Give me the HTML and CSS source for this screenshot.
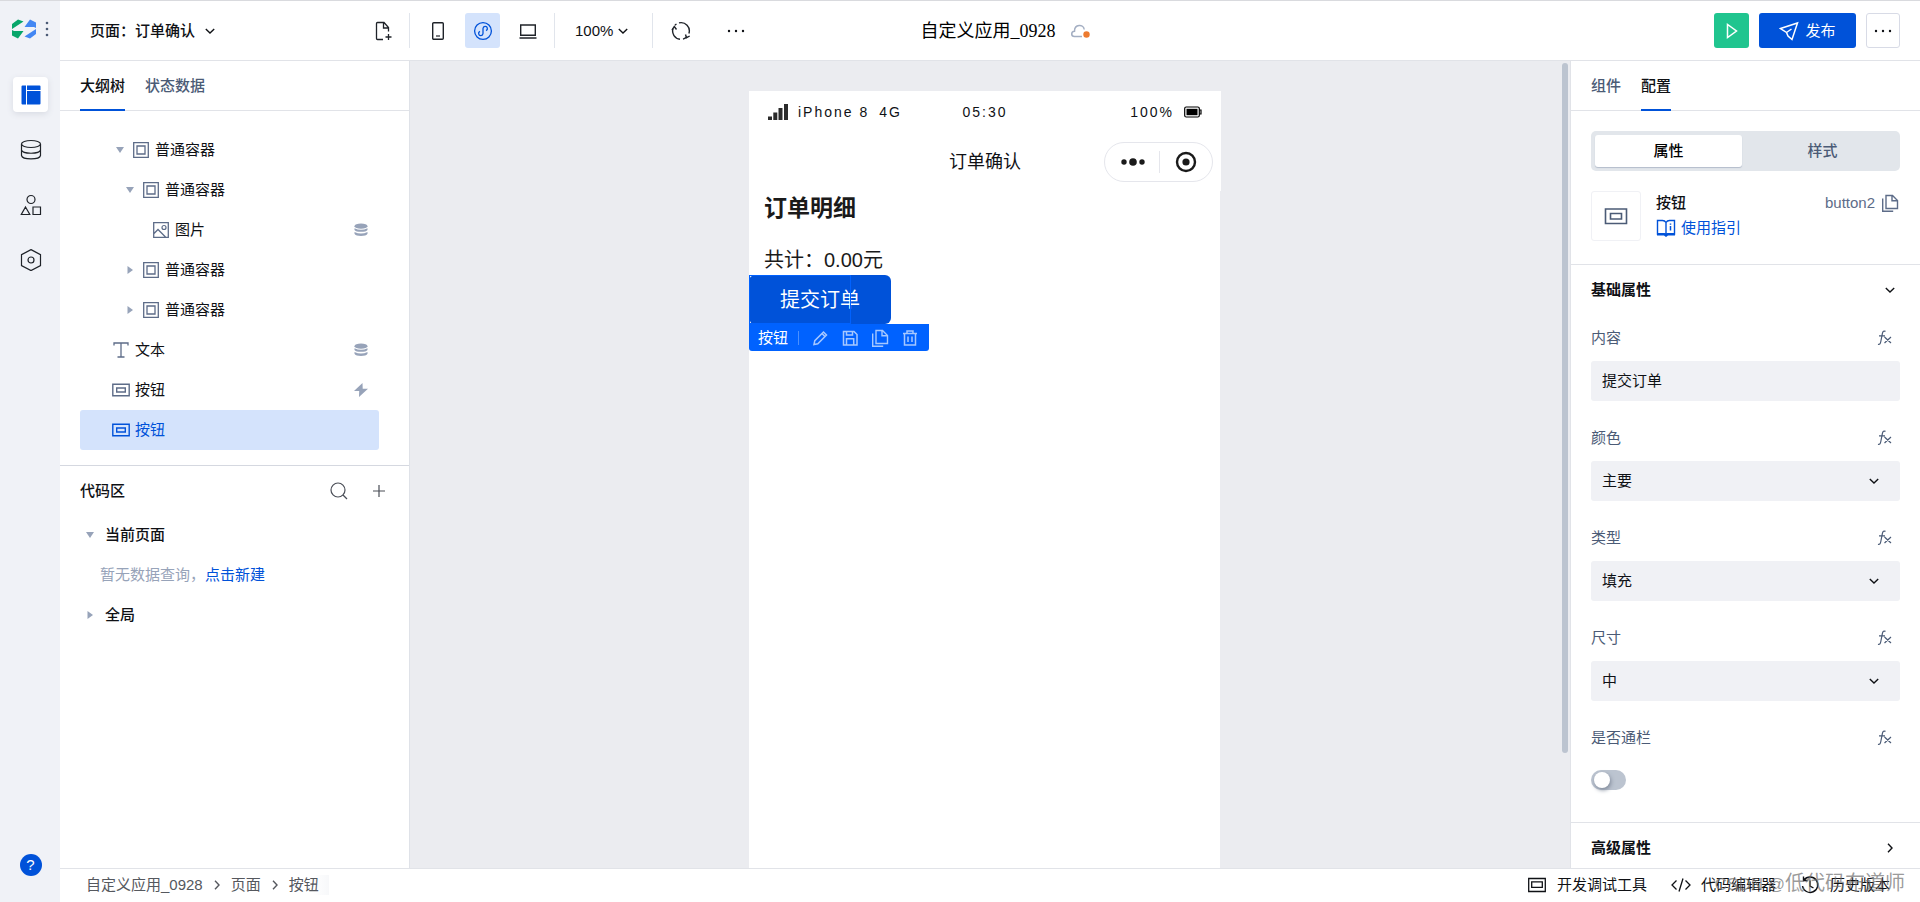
FILE: index.html
```html
<!DOCTYPE html>
<html lang="zh-CN">
<head>
<meta charset="utf-8">
<title>自定义应用_0928</title>
<link rel="stylesheet" href="styles.css">
</head>
<body>
<svg class="sprite" aria-hidden="true">
  <symbol id="i-down" viewBox="0 0 12 12"><path d="M1.800 4l4.200 4 4.200-4" stroke-width="1.400"/></symbol>
  <symbol id="i-right" viewBox="0 0 12 12"><path d="M4 1.800l4 4.200-4 4.200" stroke-width="1.400"/></symbol>
  <symbol id="i-tri-down" viewBox="0 0 8 8"><path d="M0 1h8L4 7z" fill="currentColor" stroke="none"/></symbol>
  <symbol id="i-tri-right" viewBox="0 0 8 8"><path d="M1.500 0v8L7 4z" fill="currentColor" stroke="none"/></symbol>
  <symbol id="i-box" viewBox="0 0 18 18"><path d="M1.700 1.700h14.600v14.600H1.700z" stroke-width="1.300"/><path d="M5 5h8v8H5z" stroke-width="1.300"/></symbol>
  <symbol id="i-image" viewBox="0 0 18 18"><path d="M1.700 1.700h14.600v14.600H1.700zM2 12.500l4-4 7.500 7.500" stroke-width="1.300"/><circle cx="12" cy="6.500" r="2" stroke-width="1.200"/></symbol>
  <symbol id="i-text" viewBox="0 0 18 18"><path d="M2 4.500V2h14v2.500M9 2v14M5.500 16h7" stroke-width="1.300"/></symbol>
  <symbol id="i-btn" viewBox="0 0 18 18"><path d="M.8 3.200h16.400v11.600H.8z" stroke-width="1.400"/><path d="M4.700 7h8.600v4H4.700z" stroke-width="1.400"/></symbol>
  <symbol id="i-data" viewBox="0 0 14 14"><g fill="currentColor" stroke="none"><ellipse cx="7" cy="3.200" rx="6.500" ry="2.600"/><path d="M.5 5.200q6.500 3 13 0v1.700c-1 2.600-12 2.600-13 0zM.5 9q6.500 3 13 0v1.700c-1 3-12 3-13 0z"/></g></symbol>
  <symbol id="i-bolt" viewBox="0 0 14 14"><path d="M8.500 0L0 8h5.200L5 14 14 5.800H8.700z" fill="currentColor" stroke="none"/></symbol>
  <symbol id="i-copy" viewBox="0 0 18 18"><path d="M5 1.500h6.500l5 5v8H5zM11 1.500v5.300h5.500" stroke-width="1.400"/><path d="M1.700 4.500v12.700h10.500" stroke-width="1.400"/></symbol>
  <symbol id="i-dots" viewBox="0 0 18 18"><g fill="currentColor" stroke="none"><circle cx="2" cy="9" r="1.200"/><circle cx="9" cy="9" r="1.200"/><circle cx="16" cy="9" r="1.200"/></g></symbol>
  <symbol id="i-fx" viewBox="0 0 16 16"><path d="M8.500 1.400C6.800.5 5.800 1.400 5.400 3.400L3.700 12c-.4 2-1.200 2.800-2.700 2.200M2 5.800h6M7.500 7l6.500 6M14 7l-6.500 6" stroke-width="1.200"/></symbol>
</svg>

<div class="app">
  <nav class="rail" aria-label="主导航">
    <div class="brand">
      <svg class="logo" viewBox="0 0 24 20"><path d="M0 5L6 .5l5.500 2L0 10zM0 11l2 1h9.500L6 19.500l-6-3z" fill="#07a66a"/><path d="M24 9l-2-1h-9.500L18 .5l6 3zM24 15l-6 4.500-5.500-2L24 10z" fill="#4387f3"/></svg>
      <button class="plain" aria-label="菜单"><svg class="grip" viewBox="0 0 4 16"><g fill="#4b5b76"><circle cx="2" cy="2" r="1.300"/><circle cx="2" cy="8" r="1.300"/><circle cx="2" cy="14" r="1.300"/></g></svg></button>
    </div>
    <div class="rail-items">
      <button class="rail-btn on" aria-label="页面设计"><svg viewBox="0 0 22 22"><path d="M1.500 2.500q0-1 1-1h3.500v19H2.500q-1 0-1-1zM7 1.500h12.500q1 0 1 1v3.500H7zM7 7h13.500v12.500q0 1-1 1H7z" fill="#0052d9"/></svg></button>
      <button class="rail-btn" aria-label="数据源"><svg class="line" viewBox="0 0 22 22"><ellipse cx="11" cy="5" rx="9.500" ry="3.500"/><path d="M1.500 5v11.500c1 4.500 18 4.500 19 0V5M1.500 11c1 4.300 18 4.300 19 0"/></svg></button>
      <button class="rail-btn" aria-label="组件库"><svg class="line" viewBox="0 0 22 22"><circle cx="11" cy="5.500" r="4"/><path d="M5.500 13l4.300 7.500H1.300zM13 13h7.500v7.500H13z"/></svg></button>
      <button class="rail-btn" aria-label="设置"><svg class="line" viewBox="0 0 22 22"><path d="M11 .6l9.500 5v11L11 21.600l-9.500-5v-11z"/><circle cx="11" cy="11" r="3"/></svg></button>
    </div>
    <button class="help" aria-label="帮助">?</button>
  </nav>

  <header class="top">
    <div class="top-left">
      <div class="page-bar">
        <button class="plain page-pick">页面：订单确认<svg class="ic12"><use href="#i-down"/></svg></button>
        <button class="plain" aria-label="新建页面"><svg class="ic20 line" viewBox="0 0 20 20"><path d="M9 18.500H3.500q-1 0-1-1v-15q0-1 1-1h6.500l4.500 5v4M9.500 1.500v5.500h5M14.500 13v6M11.500 16h6" stroke-width="1.300"/></svg></button>
      </div>
      <div class="devices">
        <button class="tool" aria-label="手机"><svg class="ic20 line" viewBox="0 0 20 20"><rect x="4.700" y="1.700" width="10.600" height="16.600" rx="1" stroke-width="1.400"/><path d="M8 15h4"/></svg></button>
        <button class="tool on" aria-label="小程序"><svg class="ic20" viewBox="0 0 20 20"><circle cx="10" cy="10" r="8.400" stroke-width="1.300"/><path d="M10 12.500V7.500a2.200 2.200 0 1 1 3 2.200M10 7.500v5a2.200 2.200 0 1 1-3-2.200" stroke-width="1.300"/></svg></button>
        <button class="tool" aria-label="电脑"><svg class="ic20 line" viewBox="0 0 20 20"><path d="M2.700 4h14.600v10.200H2.700zM1.500 17h17" stroke-width="1.400"/></svg></button>
      </div>
      <div class="zoom"><button class="plain zoom-btn">100%<svg class="ic12"><use href="#i-down"/></svg></button></div>
      <div class="actions">
        <button class="plain" aria-label="刷新"><svg class="ic20 line" viewBox="0 0 20 20"><path d="M8 1.900A8.300 8.300 0 0 1 17.900 12.500M16 15.700A8.300 8.300 0 0 1 12 18.100M9 18.250A8.300 8.300 0 0 1 2 7.500M4 4.200A8.300 8.300 0 0 1 5.500 3" stroke-width="1.400"/><path d="M1 9.200L3.300 5.500 5.500 8.500M14.500 13.500l1 3.200 3.200-1.700" stroke-width="1.400"/></svg></button>
        <button class="plain" aria-label="更多"><svg class="ic18"><use href="#i-dots"/></svg></button>
      </div>
    </div>
    <h1 class="app-title">自定义应用_0928<svg class="cloud" viewBox="0 0 20 16"><path d="M12 13.500H4.500C.8 13.500.8 8.500 4.500 8.200 4.500 1 13.500 1 14.200 6.500" stroke="#a3aec2" stroke-width="1.500"/><circle cx="16.500" cy="11.500" r="3.200" fill="#ed7b2f" stroke="none"/></svg></h1>
    <div class="top-right">
      <button class="play" aria-label="预览"><svg class="ic18" viewBox="0 0 18 18"><path d="M4.500 2.500v13L13.500 9z" stroke-width="1.500"/></svg></button>
      <button class="publish"><svg class="ic20" viewBox="0 0 20 20"><path d="M1.500 7.500L18.500 2l-5.500 16.500-4-3.500-1.500-3.500zM7.500 11.500l5-3.500" stroke-width="1.500"/></svg>发布</button>
      <button class="more" aria-label="更多操作"><svg class="ic18"><use href="#i-dots"/></svg></button>
    </div>
  </header>

  <aside class="left">
    <div class="tabs" role="tablist">
      <button class="tab on" role="tab">大纲树</button>
      <button class="tab" role="tab">状态数据</button>
    </div>
    <div class="tree">
      <button class="node lv2"><svg class="tri"><use href="#i-tri-down"/></svg><svg class="ic18"><use href="#i-box"/></svg><span>普通容器</span></button>
      <button class="node lv3"><svg class="tri"><use href="#i-tri-down"/></svg><svg class="ic18"><use href="#i-box"/></svg><span>普通容器</span></button>
      <button class="node lv4"><svg class="tri"></svg><svg class="ic18"><use href="#i-image"/></svg><span>图片</span><svg class="mark"><use href="#i-data"/></svg></button>
      <button class="node lv3"><svg class="tri"><use href="#i-tri-right"/></svg><svg class="ic18"><use href="#i-box"/></svg><span>普通容器</span></button>
      <button class="node lv3"><svg class="tri"><use href="#i-tri-right"/></svg><svg class="ic18"><use href="#i-box"/></svg><span>普通容器</span></button>
      <button class="node"><svg class="tri"></svg><svg class="ic18"><use href="#i-text"/></svg><span>文本</span><svg class="mark"><use href="#i-data"/></svg></button>
      <button class="node"><svg class="tri"></svg><svg class="ic18"><use href="#i-btn"/></svg><span>按钮</span><svg class="mark"><use href="#i-bolt"/></svg></button>
      <button class="node on"><svg class="tri"></svg><svg class="ic18"><use href="#i-btn"/></svg><span>按钮</span></button>
    </div>
    <section class="code">
      <div class="code-head">
        <h2>代码区</h2>
        <button class="plain" aria-label="搜索"><svg class="ic20 thin" viewBox="0 0 20 20"><circle cx="9" cy="9" r="7"/><path d="M14 14l4 4"/></svg></button>
        <button class="plain" aria-label="新增"><svg class="ic20 thin" viewBox="0 0 20 20"><path d="M10 4v12M4 10h12"/></svg></button>
      </div>
      <button class="group"><svg class="tri"><use href="#i-tri-down"/></svg>当前页面</button>
      <p class="empty">暂无数据查询，<a href="#new">点击新建</a></p>
      <button class="group"><svg class="tri"><use href="#i-tri-right"/></svg>全局</button>
    </section>
  </aside>

  <main class="stage">
    <div class="phone">
      <div class="status">
        <span class="carrier"><svg class="signal" viewBox="0 0 20 16"><path d="M0 12.500h4V16H0zM5.300 8.500h4V16h-4zM10.500 4h4v12h-4zM16 0h4v16h-4z" fill="#2b2b2b"/></svg>iPhone 8<span>4G</span></span>
        <span>05:30</span>
        <span class="power">100%<svg class="battery" viewBox="0 0 18 12"><rect x=".7" y="1" width="14.600" height="10" rx="1.500" stroke="#000" stroke-width="1.200"/><path d="M2.500 2.800h11v6.400h-11z" fill="#000" stroke="none"/><path d="M15.500 4h1.500v4h-1.500" stroke="#000" stroke-width="1.200"/></svg></span>
      </div>
      <div class="navbar">
        <span class="nav-title">订单确认</span>
        <div class="capsule">
          <button class="plain" aria-label="更多"><svg class="cap-ic" viewBox="0 0 24 24"><g fill="#1a1a1a"><circle cx="3" cy="12" r="2.700"/><circle cx="12" cy="12" r="3.800"/><circle cx="21" cy="12" r="2.700"/></g></svg></button>
          <button class="plain" aria-label="关闭"><svg class="cap-ic" viewBox="0 0 24 24"><circle cx="12" cy="12" r="9" stroke="#1a1a1a" stroke-width="2.400"/><circle cx="12" cy="12" r="3.600" fill="#1a1a1a"/></svg></button>
        </div>
      </div>
      <div class="screen">
        <h2 class="order-title">订单明细</h2>
        <p class="total">共计：0.00元</p>
        <div class="picked">
          <button class="submit">提交订单</button>
          <div class="outline"></div>
          <div class="float-bar">
            <span class="float-name">按钮</span>
            <button class="plain" aria-label="编辑"><svg class="ic18" viewBox="0 0 18 18"><path d="M3 15.500l.8-3.800L12.500 3l3 3-8.700 8.700zM11 4.500l3 3" stroke-width="1.500"/></svg></button>
            <button class="plain" aria-label="保存"><svg class="ic18" viewBox="0 0 18 18"><path d="M2.500 2.500H13l3 3v10.500H2.500zM5.500 2.500v3.500h6V2.500M5.500 16V9.800h7.200V16" stroke-width="1.500"/></svg></button>
            <button class="plain" aria-label="复制"><svg class="ic18"><use href="#i-copy"/></svg></button>
            <button class="plain" aria-label="删除"><svg class="ic18" viewBox="0 0 18 18"><path d="M2 4.500h14M6 4.200V2h6v2.200M3.500 4.500V16h11V4.500M7 7.500v5.500M11 7.500v5.500" stroke-width="1.500"/></svg></button>
          </div>
        </div>
      </div>
    </div>
    <div class="scroll-thumb"></div>
  </main>

  <aside class="right">
    <div class="tabs" role="tablist">
      <button class="tab" role="tab">组件</button>
      <button class="tab on" role="tab">配置</button>
    </div>
    <div class="summary">
      <div class="segment">
        <button class="seg on">属性</button>
        <button class="seg">样式</button>
      </div>
      <div class="ident">
        <div class="thumb"><svg class="ic24" viewBox="0 0 24 24"><path d="M1.500 5h21v14.500h-21z" stroke-width="1.600"/><path d="M6.500 9.500h11v5.500h-11z" stroke-width="1.600"/></svg></div>
        <div class="ident-text">
          <strong>按钮</strong>
          <a href="#guide"><svg class="ic20" viewBox="0 0 20 20"><path d="M10 4.500C9 2.800 8 2.500 6.500 2.500H1.500v13.500h17V2.500h-5C12 2.500 11 2.800 10 4.500V16" stroke-width="1.400"/><path d="M1 15h7.500l1.500 1 1.500-1H19v2.500h-7L10 19l-2-1.500H1z" fill="currentColor" stroke="none"/><path d="M14.500 5.500v1.300M14.500 8v4.500" stroke-width="1.500"/></svg>使用指引</a>
        </div>
        <div class="ident-id">button2<button class="plain" aria-label="复制标识"><svg class="ic18"><use href="#i-copy"/></svg></button></div>
      </div>
    </div>
    <section class="props">
      <button class="fold">基础属性<svg class="ic12"><use href="#i-down"/></svg></button>
      <div class="fields">
        <div class="field">
          <div class="field-head"><label for="f-text">内容</label><button class="plain" aria-label="表达式"><svg class="ic16"><use href="#i-fx"/></svg></button></div>
          <input class="control" id="f-text" type="text" value="提交订单">
        </div>
        <div class="field">
          <div class="field-head"><label for="f-color">颜色</label><button class="plain" aria-label="表达式"><svg class="ic16"><use href="#i-fx"/></svg></button></div>
          <div class="select"><select class="control" id="f-color"><option>主要</option></select><svg class="ic12"><use href="#i-down"/></svg></div>
        </div>
        <div class="field">
          <div class="field-head"><label for="f-type">类型</label><button class="plain" aria-label="表达式"><svg class="ic16"><use href="#i-fx"/></svg></button></div>
          <div class="select"><select class="control" id="f-type"><option>填充</option></select><svg class="ic12"><use href="#i-down"/></svg></div>
        </div>
        <div class="field">
          <div class="field-head"><label for="f-size">尺寸</label><button class="plain" aria-label="表达式"><svg class="ic16"><use href="#i-fx"/></svg></button></div>
          <div class="select"><select class="control" id="f-size"><option>中</option></select><svg class="ic12"><use href="#i-down"/></svg></div>
        </div>
        <div class="field">
          <div class="field-head"><label for="f-block">是否通栏</label><button class="plain" aria-label="表达式"><svg class="ic16"><use href="#i-fx"/></svg></button></div>
          <div class="switch-row"><input class="switch" id="f-block" type="checkbox"></div>
        </div>
      </div>
    </section>
    <button class="fold">高级属性<svg class="ic12"><use href="#i-right"/></svg></button>
  </aside>

  <footer class="foot">
    <nav class="crumbs" aria-label="路径">
      <a href="#app">自定义应用_0928</a><svg class="ic12"><use href="#i-right"/></svg><a href="#page">页面</a><svg class="ic12"><use href="#i-right"/></svg><a href="#button" class="last">按钮</a>
    </nav>
    <div class="dev">
      <button class="plain"><svg class="ic20" viewBox="0 0 20 20"><path d="M1.700 3.500h16.600v13H1.700zM4.700 6.800h10.600v5.500H4.700z" stroke-width="1.300"/></svg>开发调试工具</button>
      <button class="plain"><svg class="ic20" viewBox="0 0 20 20"><path d="M5.500 5.500L1 10l4.500 4.500M14.500 5.500L19 10l-4.500 4.500M12 3.500L8 16.500" stroke-width="1.300"/></svg>代码编辑器</button>
      <button class="plain"><svg class="ic20" viewBox="0 0 20 20"><path d="M4 5A7.700 7.700 0 1 1 2.500 11M3.500 1.500V5.500h4M10 5.500V11l3.500 2" stroke-width="1.400"/></svg>历史版本</button>
    </div>
    <span class="watermark"><span class="watermark-site">CSDN @</span>低代码布道师</span>
  </footer>
</div>
</body>
</html>
```

FILE: styles.css
```css
* { box-sizing: border-box; }

body {
  margin: 0;
  font: 15px/20px "Liberation Sans", "Noto Sans CJK SC", sans-serif;
  color: #0f1115;
}

h1, h2, p { margin: 0; font-size: inherit; font-weight: inherit; }

button, input, select { font: inherit; color: inherit; }

button {
  display: flex;
  align-items: center;
  margin: 0;
  padding: 0;
  border: 0;
  background: none;
  letter-spacing: inherit;
}

a { color: #0052d9; text-decoration: none; }

svg { display: block; flex: none; fill: none; stroke: currentColor; }
.sprite { position: absolute; width: 0; height: 0; }
.ic12 { width: 12px; height: 12px; }
.ic16 { width: 16px; height: 16px; }
.ic18 { width: 18px; height: 18px; }
.ic20 { width: 20px; height: 20px; }
.ic24 { width: 24px; height: 24px; }
.line { stroke: #1f2329; stroke-width: 1.2; }
.thin { stroke: #4a4e57; stroke-width: 1.2; }

.app {
  display: grid;
  grid-template: 60px minmax(0, 1fr) 34px / 60px 350px minmax(0, 1fr) 350px;
  grid-template-areas:
    "rail top top top"
    "rail left stage right"
    "rail foot foot foot";
  height: 100vh;
  border-top: 1px solid #d9dade;
}

/* Icon rail */
.rail {
  grid-area: rail;
  display: flex;
  flex-direction: column;
  align-items: center;
  padding: 18px 0 26px 1px;
  background: #f0f2f7;
}
.brand { display: flex; align-items: center; gap: 9px; }
.logo { width: 24px; height: 20px; stroke: none; }
.grip { width: 4px; height: 16px; stroke: none; }
.rail-items { display: flex; flex-direction: column; gap: 20px; margin-top: 38px; }
.rail-btn { justify-content: center; width: 35px; height: 35px; border-radius: 4px; }
.rail-btn.on { background: #fff; box-shadow: 0 2px 6px #d8dbe3; }
.rail-btn svg { width: 22px; height: 22px; }
.rail-btn.on svg { stroke: none; }
.help {
  justify-content: center;
  width: 22px;
  height: 22px;
  margin-top: auto;
  border-radius: 50%;
  background: #0052d9;
  color: #fff;
}

/* Header */
.top {
  grid-area: top;
  display: flex;
  align-items: center;
  padding-left: 30px;
  border-bottom: 1px solid #e1e3e8;
}
.top-left, .top-right { flex: 1 0 0; display: flex; align-items: center; }
.page-bar, .devices, .zoom {
  display: flex;
  align-items: center;
  height: 35px;
  border-right: 1px solid #e1e5ec;
}
.page-bar { justify-content: space-between; width: 320px; padding-right: 15px; }
.page-pick { gap: 9px; font-weight: 500; }
.devices { gap: 10px; padding: 0 9px 0 10px; }
.tool { justify-content: center; width: 35px; height: 35px; border-radius: 3px; }
.tool.on { background: #d4e3fc; color: #0052d9; }
.zoom { width: 98px; padding-left: 20px; }
.zoom-btn { gap: 4px; }
.actions { display: flex; align-items: center; gap: 36px; padding-left: 18px; }
.app-title {
  display: flex;
  align-items: center;
  gap: 14px;
  font: 18px/24px "Liberation Serif", "Noto Sans CJK SC", serif;
  color: #000;
}
.cloud { width: 20px; height: 16px; }
.top-right { justify-content: flex-end; gap: 10px; }
.play, .publish, .more { justify-content: center; height: 35px; border-radius: 3px; }
.play { width: 35px; background: #20c58f; color: #fff; }
.publish { gap: 6px; width: 97px; background: #0052d9; color: #fff; }
.more { width: 34px; margin-right: 20px; border: 1px solid #d8dbe6; }

/* Tabs shared by both side panels */
.tabs { display: flex; gap: 20px; height: 50px; padding: 0 20px; border-bottom: 1px solid #e1e3e8; }
.tab { height: 50px; padding-top: 2px; border-bottom: 2px solid transparent; color: #4b5b76; font-weight: 500; }
.tab.on { border-bottom-color: #0052d9; color: #0f1115; }

/* Left panel */
.left { grid-area: left; overflow: hidden; border-right: 1px solid #dfe2e8; }
.tree { padding: 19px 30px 15px 20px; border-bottom: 1px solid #d5d8e0; }
.node { width: 100%; height: 40px; padding: 0 11px 0 16px; border-radius: 3px; }
.node .ic18 { margin: 0 5px 0 8px; color: #5d6c88; }
.node.lv2 { padding-left: 36px; }
.node.lv3 { padding-left: 46px; }
.node.lv4 { padding-left: 56px; }
.node.on { background: #d4e3fc; color: #0052d9; }
.node.on .ic18 { color: #0052d9; }
.tri { width: 8px; height: 8px; color: #97a3b9; }
.mark { width: 14px; height: 14px; margin-left: auto; color: #97a3b9; }
.code { padding: 5px 20px; }
.code-head { display: flex; align-items: center; gap: 20px; height: 40px; }
.code-head h2 { margin-right: auto; font-weight: 500; }
.group { gap: 11px; height: 40px; padding-left: 6px; font-weight: 500; }
.code-head + .group { margin-top: 4px; }
.empty { padding: 10px 20px; color: #97a3b9; }

/* Canvas */
.stage {
  grid-area: stage;
  display: flex;
  justify-content: center;
  position: relative;
  padding: 30px 10px 0 0;
  overflow: hidden;
  background: #ebecf0;
}
.phone { display: flex; flex-direction: column; width: 472px; }
.status, .navbar { background: #fff; }
.status {
  display: grid;
  grid-template-columns: 1fr auto 1fr;
  align-items: center;
  height: 42px;
  padding: 0 19px;
  font-size: 14px;
  letter-spacing: 2px;
}
.carrier, .power { display: flex; align-items: center; gap: 10px; }
.power { justify-content: flex-end; }
.signal { width: 20px; height: 16px; stroke: none; }
.battery { width: 18px; height: 12px; }
.navbar {
  display: grid;
  grid-template-columns: 1fr auto 1fr;
  align-items: center;
  height: 58px;
  padding: 0 8px;
}
.nav-title { grid-column: 2; font-size: 18px; }
.capsule {
  display: flex;
  justify-self: end;
  width: 109px;
  height: 40px;
  padding: 8px 0 8px 2px;
  border: 1px solid #e5e6ec;
  border-radius: 20px;
}
.capsule button { flex: 1; justify-content: center; }
.capsule button + button { border-left: 1px solid #e5e6ec; }
.cap-ic { width: 24px; height: 24px; stroke: none; }
.screen { flex: 1; margin-right: 1px; background: #fff; }
.order-title { padding: 0 15px; font-size: 23px; line-height: 34px; font-weight: 700; color: #1a1a1a; }
.total { padding: 20px 15px 0; font-size: 20px; line-height: 30px; color: #1a1a1a; }
.picked { position: relative; width: 142px; }
.submit {
  justify-content: center;
  width: 100%;
  height: 49px;
  border-radius: 6px;
  background: #0052d9;
  color: #fff;
  font-size: 20px;
}
.outline { position: absolute; inset: 0 40px 0 0; border: 1px solid #0062ff; }
.float-bar {
  position: absolute;
  top: 100%;
  left: 0;
  display: flex;
  align-items: center;
  gap: 12px;
  width: 180px;
  height: 27px;
  padding-left: 9px;
  border-radius: 0 0 3px 3px;
  background: #0062ff;
  color: #a6c8ff;
}
.float-name { padding-right: 10px; line-height: 14px; border-right: 1px solid #4a90ff; color: #fff; }
.scroll-thumb {
  position: absolute;
  top: 2px;
  right: 2px;
  width: 6px;
  height: 690px;
  border-radius: 3px;
  background: #bcc4d0;
}

/* Right panel */
.right { grid-area: right; overflow: hidden; border-left: 1px solid #e1e3e8; }
.summary { padding: 20px 20px 23px; border-bottom: 1px solid #e1e3e8; }
.segment { display: flex; gap: 7px; padding: 4px; border-radius: 5px; background: #e2e6eb; }
.seg { flex: 1; justify-content: center; height: 32px; border-radius: 3px; color: #4b5b76; font-weight: 500; }
.seg.on { background: #fff; color: #000; box-shadow: 0 1px 1px #b4bccb; }
.ident { display: flex; align-items: flex-start; margin-top: 20px; }
.thumb {
  display: flex;
  align-items: center;
  justify-content: center;
  width: 50px;
  height: 50px;
  border: 1px solid #f0f1f5;
  border-radius: 3px;
  color: #4b5b76;
}
.ident-text { display: flex; flex-direction: column; gap: 5px; margin: 2px auto 0 15px; }
.ident-text strong { font-weight: 500; }
.ident-text a { display: flex; align-items: center; gap: 5px; }
.ident-id { display: flex; align-items: center; gap: 6px; margin: 2px 1px 0 0; color: #5d6c88; }
.fold {
  justify-content: space-between;
  width: 100%;
  height: 50px;
  padding: 0 24px 0 20px;
  font-weight: 700;
}
.props { border-bottom: 1px solid #e1e3e8; }
.fields { display: flex; flex-direction: column; gap: 24px; padding: 10px 20px 21px; }
.field { display: flex; flex-direction: column; gap: 10px; }
.field-head {
  display: flex;
  align-items: center;
  justify-content: space-between;
  height: 26px;
  padding-right: 7px;
  color: #4b5b76;
}
.control {
  width: 100%;
  height: 40px;
  padding: 0 11px;
  border: 0;
  border-radius: 3px;
  background: #f0f1f5;
  color: #0f1115;
  appearance: none;
}
input.control { padding-bottom: 3px; }
.select { position: relative; }
.select svg { position: absolute; top: 14px; right: 20px; pointer-events: none; }
.switch-row { display: flex; align-items: center; height: 40px; padding-bottom: 2px; }
.switch {
  width: 35px;
  height: 20px;
  margin: 0;
  padding: 2px 3px;
  border-radius: 10px;
  background: #bcc4d0;
  appearance: none;
}
.switch::before {
  content: "";
  display: block;
  width: 16px;
  height: 16px;
  border-radius: 50%;
  background: #fff;
  box-shadow: 1px 2px 4px #7e8899;
}

/* Footer */
.foot {
  grid-area: foot;
  display: flex;
  align-items: center;
  justify-content: space-between;
  position: relative;
  padding: 0 30px 2px 26px;
  border-top: 1px solid #e1e3e8;
}
.crumbs { display: flex; align-items: center; gap: 8px; color: #55585e; }
.crumbs a { color: inherit; }
.crumbs .last { padding-right: 10px; background: linear-gradient(90deg, #fff 60%, #f7f8fa); }
.dev { display: flex; gap: 24px; }
.dev button { gap: 10px; }
.watermark {
  position: absolute;
  right: 15px;
  top: 0;
  font-size: 20px;
  line-height: 28px;
  color: rgba(110, 110, 110, .7);
}
.watermark-site { font-size: 17px; }
```
